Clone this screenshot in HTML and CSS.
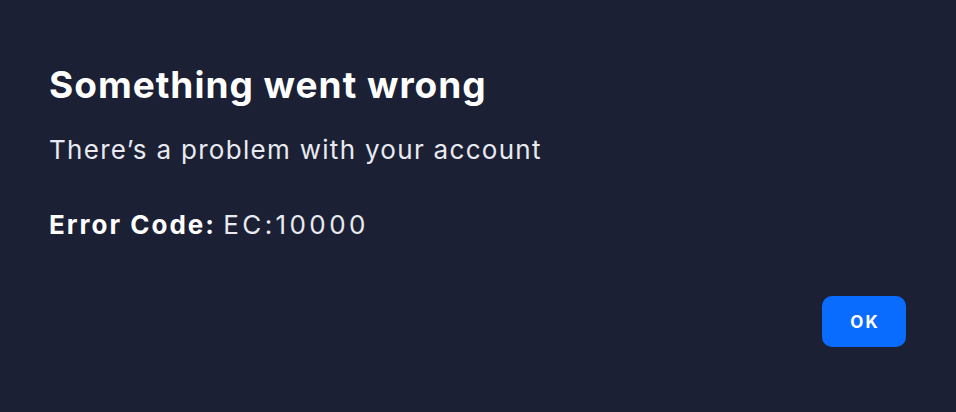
FILE: index.html
```html
<!DOCTYPE html>
<html lang="en">
<head>
    <meta charset="UTF-8">
    <meta name="viewport" content="width=device-width, initial-scale=1.0">
    <title>Something went wrong</title>
    <link rel="stylesheet" href="styles.css">
</head>
<body>
    <div class="dialog">
        <h1 class="title">Something went wrong</h1>
        <p class="message">There’s a problem with your account</p>
        <p class="code"><strong>Error Code:</strong> <span class="code-value">EC:10000</span></p>
        <div class="actions">
            <button class="button">OK</button>
        </div>
    </div>
</body>
</html>
```

FILE: styles.css
```css
body {
    margin: 0;
    background: #1c2035;
    color: #ffffff;
    font-family: Inter, 'Noto Sans', sans-serif;
    height: 100vh;
}
.dialog {
    padding: 62px 50px 0 49px;
    display: flex;
    flex-direction: column;
}
.title {
    margin: 0;
    font-size: 37px;
    line-height: 45px;
    font-weight: 700;
    letter-spacing: 1px;
}
.message {
    margin: 27px 0 0;
    font-size: 26px;
    line-height: 32px;
    letter-spacing: 1.3px;
    color: #e8eaf0;
}
.code {
    margin: 43px 0 0;
    font-size: 26px;
    line-height: 32px;
    color: #e8eaf0;
}
.code strong {
    color: #ffffff;
    letter-spacing: 2px;
}
.code-value {
    letter-spacing: 3.4px;
}
.actions {
    display: flex;
    justify-content: flex-end;
    margin-top: 55px;
}
.button {
    width: 84px;
    height: 51px;
    padding: 0 0 0 2px;
    border: none;
    border-radius: 10px;
    background: #0a6cff;
    color: white;
    font-family: inherit;
    font-size: 17px;
    font-weight: 700;
    letter-spacing: 2px;
    cursor: pointer;
}
```
